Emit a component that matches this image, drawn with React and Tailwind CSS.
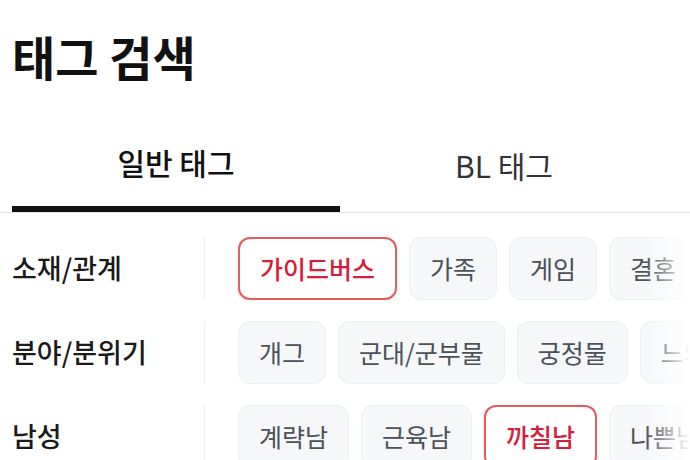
const ROWS = [
  {
    label: "소재/관계",
    tags: [
      { name: "가이드버스", on: true },
      { name: "가족" },
      { name: "게임" },
      { name: "결혼" },
      { name: "계약" },
    ],
  },
  {
    label: "분야/분위기",
    tags: [
      { name: "개그" },
      { name: "군대/군부물" },
      { name: "궁정물" },
      { name: "느와르" },
    ],
  },
  {
    label: "남성",
    tags: [
      { name: "계략남" },
      { name: "근육남" },
      { name: "까칠남", on: true },
      { name: "나쁜남" },
    ],
  },
];

function Chip({ name, on }) {
  return (
    <span
      className={`shrink-0 h-[63px] px-[20px] flex items-center rounded-[12px] text-[25px] whitespace-nowrap ${
        on
          ? "bg-white border-2 border-[#e65a60] text-[#d71d3a] font-medium shadow-[0_2px_4px_rgba(0,0,0,0.08)]"
          : "bg-[#f6f7f9] border border-[#eceef1] text-[#4b5059]"
      }`}
    >
      {name}
    </span>
  );
}

export default function App() {
  return (
    <div
      className="w-[690px] h-[460px] overflow-hidden bg-white"
      style={{ fontFamily: '"Noto Sans CJK KR", "Noto Sans", sans-serif' }}
    >
      {/* Title */}
      <div className="h-[110px] px-[12px] flex items-center">
        <h1 className="text-[47px] font-bold text-[#111] leading-none">태그 검색</h1>
      </div>

      {/* Tabs */}
      <div className="relative border-b border-[#e3e5e8]">
        <div className="flex px-[12px] pr-[22px]">
          <div className="flex-1 h-[102px] pt-[8px] flex items-center justify-center text-[30px] font-medium text-[#111] border-b-[6px] border-[#111] mb-[-1px]">
            일반 태그
          </div>
          <div className="flex-1 h-[102px] pt-[8px] flex items-center justify-center text-[30px] text-[#333]">
            BL 태그
          </div>
        </div>
      </div>

      {/* Tag rows */}
      <div className="relative pt-[24px] flex flex-col gap-[21px]">
        {ROWS.map((row) => (
          <div key={row.label} className="flex items-center h-[63px]">
            <div className="w-[205px] shrink-0 h-full pl-[12px] flex items-center border-r border-[#eceef0] text-[27px] font-medium text-[#1a1a1a]">
              {row.label}
            </div>
            <div className="flex gap-[12px] pl-[33px] overflow-hidden">
              {row.tags.map((t) => (
                <Chip key={t.name} {...t} />
              ))}
            </div>
          </div>
        ))}
        <div className="absolute top-0 right-0 bottom-0 w-[45px] bg-gradient-to-r from-white/0 to-white" />
      </div>
    </div>
  );
}
